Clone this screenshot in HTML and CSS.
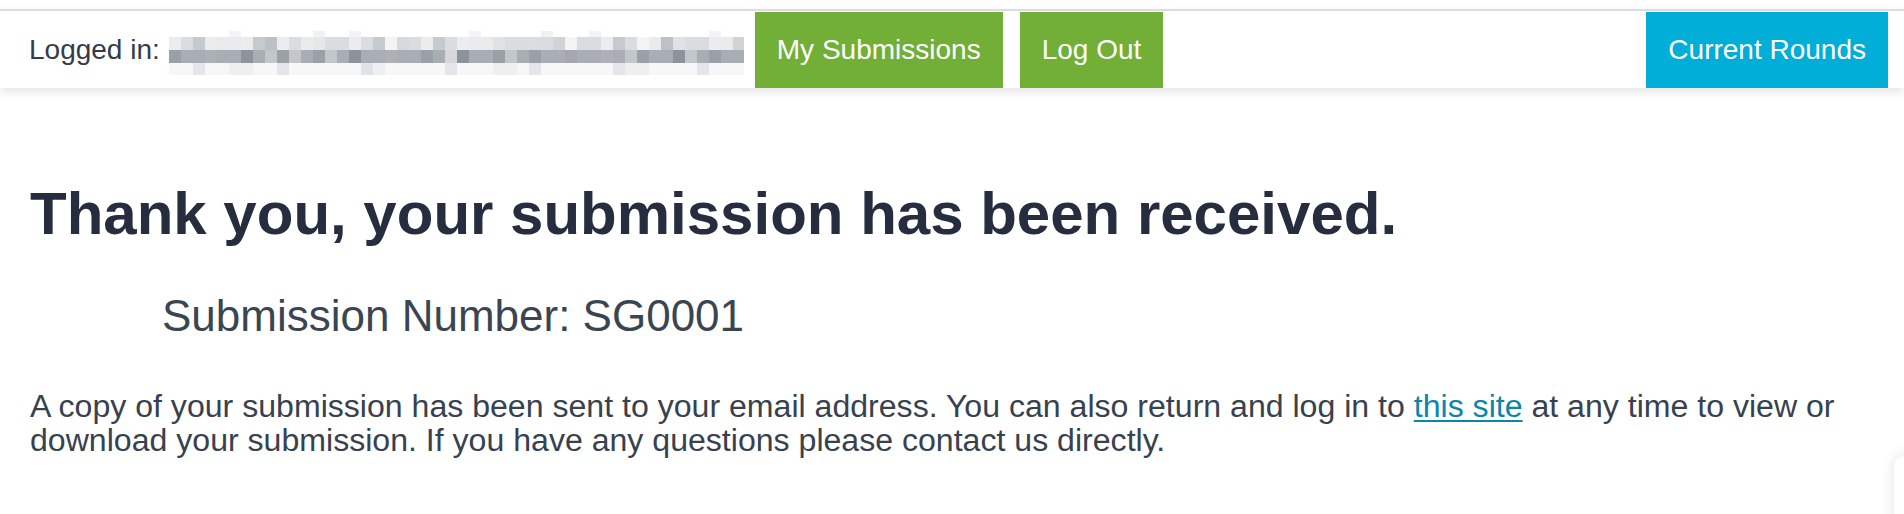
FILE: index.html
```html
<!DOCTYPE html>
<html lang="en">
<head>
<meta charset="utf-8">
<title>Submission received</title>
<link rel="stylesheet" href="styles.css">
</head>
<body>
<header class="topbar">
  <span class="logged-label">Logged in:</span>
  <span class="email-blur" aria-label="hidden email">
    <span class="blur-row r0"></span>
    <span class="blur-row r1"></span>
    <span class="blur-row r2"></span>
    <span class="blur-row r3"></span>
  </span>
  <a class="btn btn-green btn-subs" href="#">My Submissions</a>
  <a class="btn btn-green btn-logout" href="#">Log Out</a>
  <span class="spacer"></span>
  <a class="btn btn-blue" href="#">Current Rounds</a>
</header>
<main class="content">
  <h1 class="title">Thank you, your submission has been received.</h1>
  <p class="sub-number">Submission Number: SG0001</p>
  <p class="note">A copy of your submission has been sent to your email address. You can also return and log in to <a class="link" href="#">this site</a> at any time to view or download your submission. If you have any questions please contact us directly.</p>
</main>
<div class="float-widget"></div>
</body>
</html>
```

FILE: styles.css
```css
html, body {
  margin: 0;
  padding: 0;
  background: #ffffff;
  overflow: hidden;
}
body {
  font-family: "Liberation Sans", Arial, Helvetica, sans-serif;
  color: #37424e;
  height: 514px;
  position: relative;
}
.topbar {
  margin-top: 9px;
  border-top: 2px solid #dedbe7;
  padding: 1px 16px 0 29px;
  height: 76px;
  display: flex;
  align-items: stretch;
  background: #fff;
  box-shadow: 0 4px 9px rgba(0, 0, 0, 0.10);
  position: relative;
  z-index: 1;
}
.logged-label {
  font-size: 28px;
  color: #333d49;
  align-self: center;
  line-height: 32px;
}
.email-blur {
  width: 575px;
  margin-left: 9px;
  align-self: center;
  margin-top: 6px;
  display: flex;
  flex-direction: column;
}
.blur-row {
  display: block;
  height: 12px;
}
.blur-row.r0 {
  height: 6px;
  background-image:
    repeating-linear-gradient(90deg, transparent 0 144px, rgba(230,232,235,.6) 144px 156px, transparent 156px 228px),
    repeating-linear-gradient(90deg, transparent 0 60px, rgba(240,241,243,.8) 60px 72px, transparent 72px 120px);
}
.blur-row.r1 {
  height: 13px;
  background-color: #dadde0;
  background-image:
    repeating-linear-gradient(90deg, rgba(255,255,255,.45) 0 12px, transparent 12px 36px),
    repeating-linear-gradient(90deg, transparent 0 24px, rgba(150,158,166,.3) 24px 36px, transparent 36px 60px),
    repeating-linear-gradient(90deg, transparent 0 48px, rgba(255,255,255,.4) 48px 72px, transparent 72px 84px),
    repeating-linear-gradient(90deg, transparent 0 96px, rgba(120,128,138,.3) 96px 108px, transparent 108px 132px);
}
.blur-row.r2 {
  height: 13px;
  background-color: #a9aeb4;
  background-image:
    repeating-linear-gradient(90deg, rgba(120,128,138,.3) 0 12px, transparent 12px 36px),
    repeating-linear-gradient(90deg, transparent 0 36px, rgba(255,255,255,.3) 36px 48px, transparent 48px 60px),
    repeating-linear-gradient(90deg, transparent 0 72px, rgba(90,98,110,.25) 72px 84px, transparent 84px 108px),
    repeating-linear-gradient(90deg, transparent 0 120px, rgba(255,255,255,.3) 120px 132px, transparent 132px 156px);
}
.blur-row.r3 {
  height: 12px;
  background-color: #f6f7f8;
  background-image:
    repeating-linear-gradient(90deg, transparent 0 24px, rgba(215,218,222,.6) 24px 36px, transparent 36px 84px),
    repeating-linear-gradient(90deg, transparent 0 60px, rgba(235,237,239,.8) 60px 84px, transparent 84px 132px);
}
.btn {
  display: flex;
  align-items: center;
  padding: 0 22px;
  font-size: 28px;
  color: #ffffff;
  text-decoration: none;
  white-space: nowrap;
}
.btn-green { background: #72af37; }
.btn-blue { background: #00aed7; }
.btn-subs { margin-left: 11px; }
.btn-logout { margin-left: 17px; }
.spacer { flex: 1; }

.content {
  padding: 0 30px;
}
.title {
  margin: 90px 0 0 0;
  font-size: 60px;
  line-height: 72px;
  font-weight: bold;
  color: #262d3e;
}
.sub-number {
  margin: 40px 0 0 132px;
  font-size: 44px;
  line-height: 52px;
  color: #3a4552;
}
.note {
  margin: 47px 0 0 0;
  font-size: 32.1px;
  line-height: 34px;
  color: #37424e;
}
.link {
  color: #0b87a6;
  text-decoration: underline;
  text-underline-offset: 3px;
  text-decoration-thickness: 2px;
}
.float-widget {
  position: absolute;
  left: 1894px;
  top: 455px;
  width: 80px;
  height: 100px;
  border-radius: 12px;
  background: #fff;
  box-shadow: 0 0 14px rgba(0, 0, 0, 0.12);
}
```
